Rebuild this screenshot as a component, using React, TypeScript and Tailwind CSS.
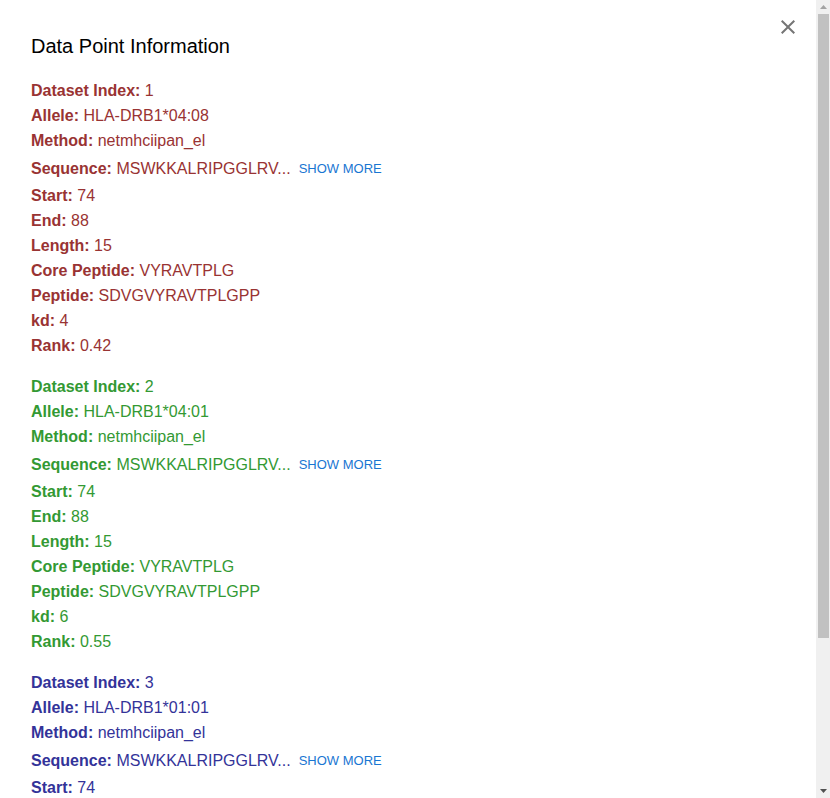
import { useState } from "react";

type Point = {
  index: number;
  allele: string;
  rest: [string, string][];
  color: string;
};

const SHORT = "MSWKKALRIPGGLRV...";
const FULL = "MSWKKALRIPGGLRVATVTLMLAMLSTPVAEGRDSPEDFVYQFK";

const sharedFields: [string, string][] = [
  ["Start", "74"],
  ["End", "88"],
  ["Length", "15"],
  ["Core Peptide", "VYRAVTPLG"],
  ["Peptide", "SDVGVYRAVTPLGPP"],
];

const points: Point[] = [
  { index: 1, allele: "HLA-DRB1*04:08", rest: [...sharedFields, ["kd", "4"], ["Rank", "0.42"]], color: "text-[#993333]" },
  { index: 2, allele: "HLA-DRB1*04:01", rest: [...sharedFields, ["kd", "6"], ["Rank", "0.55"]], color: "text-[#339933]" },
  { index: 3, allele: "HLA-DRB1*01:01", rest: [["Start", "74"]], color: "text-[#333399]" },
];

function Field({ label, value }: { label: string; value: string }) {
  return (
    <p className="leading-[25px]">
      <strong>{label}:</strong> {value}
    </p>
  );
}

function DataPoint({ point }: { point: Point }) {
  const [open, setOpen] = useState(false);
  return (
    <section className={point.color}>
      <Field label="Dataset Index" value={String(point.index)} />
      <Field label="Allele" value={point.allele} />
      <Field label="Method" value="netmhciipan_el" />
      <div className="flex min-h-[30px] items-center gap-2">
        <p className="min-w-0 break-words leading-[25px]">
          <strong>Sequence:</strong> {open ? FULL : SHORT}
        </p>
        <button
          type="button"
          onClick={() => setOpen(!open)}
          className="shrink-0 cursor-pointer text-[13px] uppercase leading-[23px] text-[#1976d2]"
        >
          {open ? "Show less" : "Show more"}
        </button>
      </div>
      {point.rest.map(([label, value]) => (
        <Field key={label} label={label} value={value} />
      ))}
    </section>
  );
}

function ScrollTrack() {
  return (
    <div aria-hidden="true" className="flex w-[14px] shrink-0 flex-col items-center bg-[#f0f0f0]">
      <svg className="size-[14px] shrink-0" viewBox="0 0 14 14">
        <path d="M4 9h7L7.5 5z" fill="#a3a3a3" />
      </svg>
      <div className="flex w-full flex-1 flex-col pl-[2px] pr-px">
        <div className="h-[81%] bg-[#c1c1c1]" />
      </div>
      <svg className="size-[14px] shrink-0" viewBox="0 0 14 14">
        <path d="M4 5h7L7.5 9z" fill="#505050" />
      </svg>
    </div>
  );
}

export default function App() {
  return (
    <div className="flex h-screen overflow-hidden bg-white font-['Liberation_Sans',Arial,sans-serif] text-base">
      <main className="relative min-w-0 flex-1 overflow-hidden px-[31px] pt-[30px]">
        <h2 className="mb-4 text-xl leading-8 text-black">Data Point Information</h2>
        <button
          type="button"
          aria-label="Close"
          className="absolute right-2 top-[7px] cursor-pointer rounded-full p-2 text-[#757575]"
        >
          <svg className="size-6" viewBox="0 0 24 24" fill="currentColor">
            <path d="M19 6.41 17.59 5 12 10.59 6.41 5 5 6.41 10.59 12 5 17.59 6.41 19 12 13.41 17.59 19 19 17.59 13.41 12z" />
          </svg>
        </button>
        <div className="flex flex-col gap-4">
          {points.map((point) => (
            <DataPoint key={point.index} point={point} />
          ))}
        </div>
      </main>
      <ScrollTrack />
    </div>
  );
}
